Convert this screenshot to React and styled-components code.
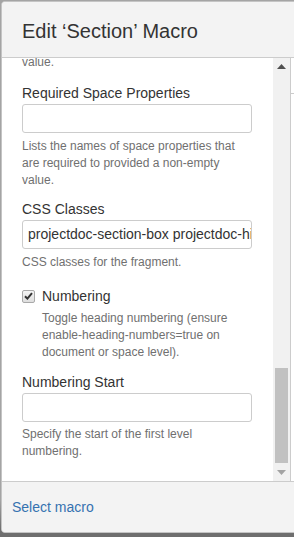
import React from 'react'
import styled, { createGlobalStyle } from 'styled-components'

const Global = createGlobalStyle`
  html, body {
    margin: 0;
    padding: 0;
    background: #7a7a7a;
    overflow: hidden;
  }
  body {
    font-family: "Liberation Sans", Arial, sans-serif;
  }
`

const Page = styled.div`
  width: 294px;
  height: 537px;
  overflow: hidden;
  background: linear-gradient(#a4a4a4, #a4a4a4 500px, #6e6e6e 530px);
`

const Dialog = styled.div`
  margin: 1px 0 0 1px;
  width: 330px;
  height: 530px;
  border: 1px solid #c4c4c4;
  border-radius: 4px;
  background: #f3f3f3;
  display: flex;
  flex-direction: column;
  overflow: hidden;
`

const Header = styled.div`
  height: 51px;
  padding: 4px 20px 0;
  display: flex;
  align-items: center;
  border-bottom: 1px solid #cccccc;
  background: #f3f3f3;
`

const Title = styled.h2`
  margin: 0;
  font-size: 20px;
  font-weight: normal;
  color: #333333;
`

const Body = styled.div`
  height: 423px;
  display: flex;
  background: #ffffff;
`

const Content = styled.div`
  width: 271px;
  box-sizing: border-box;
  padding: 0 21px 0 20px;
  overflow: hidden;
`

const Label = styled.div`
  margin-top: ${(p) => p.$top || 0}px;
  margin-bottom: 1px;
  font-size: 14px;
  line-height: 20px;
  color: #333333;
`

const Input = styled.div`
  height: 27px;
  box-sizing: content-box;
  border: 1px solid #cccccc;
  border-radius: 3px;
  padding: 0 5px;
  font-size: 14px;
  line-height: 27px;
  color: #333333;
  white-space: nowrap;
  overflow: hidden;
`

const Desc = styled.div`
  margin-top: ${(p) => p.$top || 0}px;
  padding-left: ${(p) => p.$indent || 0}px;
  font-size: 12px;
  line-height: 17px;
  color: #707070;
`

const CheckRow = styled.label`
  margin-top: 15px;
  display: flex;
  align-items: center;
  gap: 7px;
  font-size: 14px;
  line-height: 20px;
  color: #333333;
`

const Box = styled.span`
  width: 11px;
  height: 11px;
  border: 1px solid #a9a9a9;
  border-radius: 2px;
  background: linear-gradient(#f4f4f4, #dedede);
  display: flex;
  align-items: center;
  justify-content: center;
`

const Scrollbar = styled.div`
  width: 17px;
  background: #f1f1f1;
  display: flex;
  flex-direction: column;
  align-items: center;
`

const Arrow = styled.div`
  width: 17px;
  height: 17px;
  display: flex;
  align-items: center;
  justify-content: center;
  margin-top: ${(p) => (p.$down ? '1px' : 0)};
`

const Thumb = styled.div`
  margin-top: auto;
  width: 13px;
  height: 95px;
  background: #c1c1c1;
`

const SidePanel = styled.div`
  flex: 1;
  border-left: 1px solid #cccccc;
  background: #ffffff;
  padding-top: 35px;
`

const SideLine = styled.div`
  height: 1px;
  background: #cccccc;
`

const Footer = styled.div`
  flex: 1;
  border-top: 1px solid #cccccc;
  background: #f3f3f3;
  display: flex;
  align-items: center;
  padding-left: 10px;
`

const Link = styled.a`
  font-size: 14px;
  color: #3572b0;
  text-decoration: none;
`

function Triangle({ up, color }) {
  return (
    <svg width="9" height="5" viewBox="0 0 9 5">
      <path d={up ? 'M0 5 L4.5 0 L9 5 Z' : 'M0 0 L4.5 5 L9 0 Z'} fill={color} />
    </svg>
  )
}

export default function App() {
  return (
    <Page>
      <Global />
      <Dialog>
        <Header>
          <Title>Edit ‘Section’ Macro</Title>
        </Header>
        <Body>
          <Content>
            <Desc $top={-4}>value.</Desc>

            <Label $top={12}>Required Space Properties</Label>
            <Input />
            <Desc $top={5}>
              Lists the names of space properties that are required to provided a non-empty value.
            </Desc>

            <Label $top={10}>CSS Classes</Label>
            <Input>projectdoc-section-box projectdoc-hide-in-print</Input>
            <Desc $top={5}>CSS classes for the fragment.</Desc>

            <CheckRow>
              <Box>
                <svg width="9" height="8" viewBox="0 0 9 8">
                  <path d="M1 4.2 L3.4 6.6 L8 1.2" stroke="#333" strokeWidth="2" fill="none" />
                </svg>
              </Box>
              Numbering
            </CheckRow>
            <Desc $top={4} $indent={20}>
              Toggle heading numbering (ensure enable-heading-numbers=true on document or space level).
            </Desc>

            <Label $top={11}>Numbering Start</Label>
            <Input />
            <Desc $top={4}>Specify the start of the first level numbering.</Desc>
          </Content>
          <Scrollbar>
            <Arrow>
              <Triangle up color="#505050" />
            </Arrow>
            <Thumb />
            <Arrow $down>
              <Triangle color="#a3a3a3" />
            </Arrow>
          </Scrollbar>
          <SidePanel>
            <SideLine />
          </SidePanel>
        </Body>
        <Footer>
          <Link href="#">Select macro</Link>
        </Footer>
      </Dialog>
    </Page>
  )
}
